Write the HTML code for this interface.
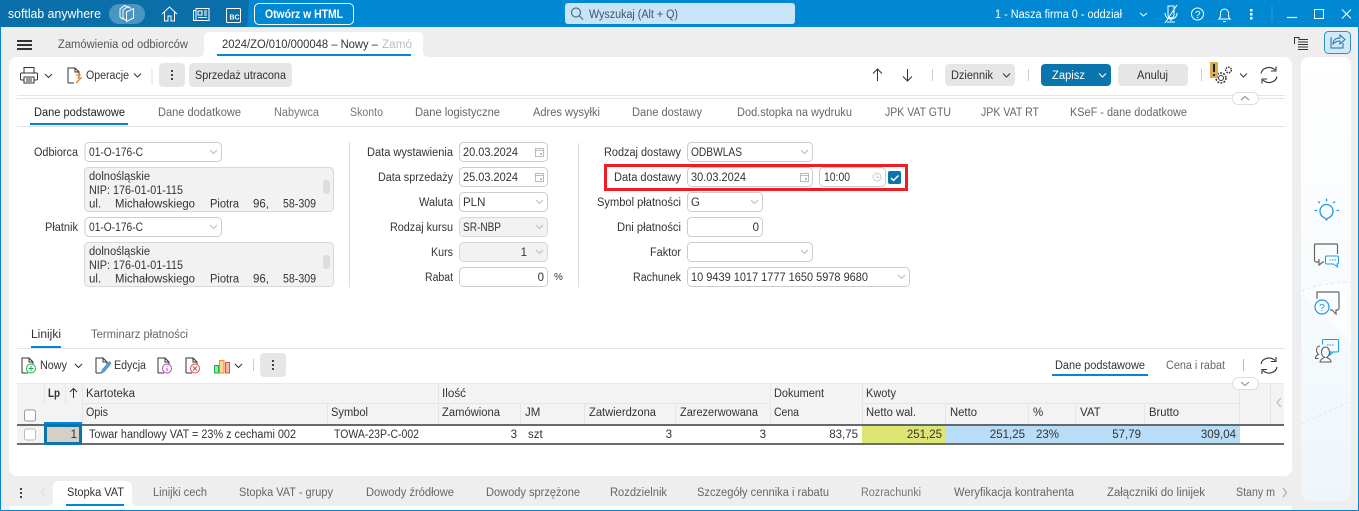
<!DOCTYPE html>
<html lang="pl"><head><meta charset="utf-8"><title>softlab anywhere</title>
<style>
html,body{margin:0;padding:0;background:#eee;width:1359px;height:511px;overflow:hidden}
svg{display:block}
text{font-family:"Liberation Sans",sans-serif;font-size:11.5px;fill:#333;white-space:pre}
.g{fill:#666}.w{fill:#fff}.b{font-weight:bold}.l{fill:#777}
.f{fill:#fff;stroke:#ccc}.d{fill:#f2f2f2;stroke:#d8d8d8}
.i{fill:none;stroke:#333;stroke-width:1}.iw{fill:none;stroke:#fff;stroke-width:1}
.k{fill:none;stroke:#333;stroke-width:1}
.h{fill:#f3f3f3}.s{stroke:#e6e6e6;stroke-width:1}
</style></head><body>
<svg width="1359" height="511" viewBox="0 0 1359 511" xmlns="http://www.w3.org/2000/svg">
<defs>
<linearGradient id="pn" x1="0" y1="0" x2="0" y2="1"><stop offset="0" stop-color="#fff"/><stop offset=".5" stop-color="#f8fbfd"/><stop offset="1" stop-color="#eef6fc"/></linearGradient>
<path id="ch" d="M0 0l3.5 3.5L7 0" fill="none"/>
<g id="doc"><path d="M1 16V1h7l4 4v4M8 1v4h4M1 16h6" fill="none" stroke="#333"/></g>
<g id="ref"><path d="M1 7A8 7 0 0 1 15 3.5M17 10A8 7 0 0 1 3 13.5" fill="none" stroke="#333" stroke-width="1.1"/><path d="M16 0v4.500h-5M2 17v-4.500h5" fill="none" stroke="#333" stroke-width="1.1"/></g>
<g id="cal"><rect x=".5" y="1.500" width="8" height="8" fill="none" stroke="#bbb"/><path d="M.5 3.500h8" stroke="#bbb"/><rect x="5" y="6" width="2" height="2" fill="#bbb"/></g>
</defs>

<!-- window -->
<rect width="1359" height="511" fill="#0089d2"/>
<rect x="1" y="27" width="1357" height="483" fill="#eee"/>
<path d="M0 0H249L247 27H0Z" fill="#0a6ea8"/>
<text class="w" x="8" y="18" style="font-size:12.500px" textLength="93" lengthAdjust="spacingAndGlyphs">softlab anywhere</text>
<rect x="109" y="4" width="36" height="20" rx="10" fill="#4b95c1"/>
<path class="iw" d="M123 19.500l-3-2.500V9l4.500-3.500 4.500 2M126 20.500l-3-2.500V10l5-3.500 3 2M126.500 12l7-3.500V18l-7 3.500z"/>
<path class="iw" d="M162 14l7.500-7 7.500 7M164.500 12v9h3.500v-5h3v5h3.500v-9"/>
<g class="iw"><rect x="196" y="8.500" width="13" height="12"/><path d="M196 10.500h-2.500v10h2.500M198 11h4v4h-4zM204 11h3M204 13h3M204 15h3M198 17.500h9"/></g>
<rect class="iw" x="226.500" y="8.500" width="14" height="14" rx="1"/><text class="w b" x="229.500" y="19.500" style="font-size:7px">BC</text>
<rect x="254.500" y="3.500" width="99" height="21" rx="4.500" fill="#0089d2" stroke="#fff"/>
<text class="w b" x="265" y="18" textLength="78" lengthAdjust="spacingAndGlyphs">Otwórz w HTML</text>

<rect x="565" y="3" width="230" height="21" rx="3" fill="#c9e4f6"/>
<circle cx="576" cy="12.500" r="4.500" fill="none" stroke="#4a6f88" stroke-width="1.200"/><path d="M579.500 16l3.500 3.500" stroke="#4a6f88" stroke-width="1.200"/>
<text x="589" y="18" textLength="89" lengthAdjust="spacingAndGlyphs" style="fill:#3e5566">Wyszukaj (Alt + Q)</text>

<text class="w" x="995" y="18" textLength="127" lengthAdjust="spacingAndGlyphs">1 - Nasza firma 0 - oddział</text>
<path d="M1140 13l3.500 3 3.500-3" class="iw" stroke-width="1.500"/>
<g class="iw"><path d="M1168 6h6v9a3 3 0 0 1-6 0zM1165 13c0 4 3 6 6 6s6-2 6-6M1171 19v2M1167 22h8M1165 23L1177 5"/></g>
<circle class="iw" cx="1197.500" cy="14" r="6"/><text class="w" x="1195" y="18" style="font-size:10px">?</text>
<path class="iw" d="M1219 19c1.500-1 1.500-3 1.500-6a4 4 0 0 1 8 0c0 3 0 5 1.500 6zM1223 21.500h3"/>
<g fill="#fff"><rect x="1250" y="9" width="2.500" height="2.500"/><rect x="1250" y="13" width="2.500" height="2.500"/><rect x="1250" y="17" width="2.500" height="2.500"/></g>
<path d="M1272 6v16" stroke="#2a9edb"/>
<path d="M1287 17.500h10" stroke="#fff" stroke-width="1.200"/>
<rect class="iw" x="1314.500" y="9.500" width="9" height="9" stroke-width="1.200"/>
<path class="iw" d="M1342 9.500l9 9M1351 9.500l-9 9"/>

<!-- upper tabs -->
<g fill="#333"><rect x="17" y="40" width="15" height="2"/><rect x="17" y="44" width="15" height="2"/><rect x="17" y="48" width="15" height="2"/></g>
<text x="58" y="48" textLength="130" lengthAdjust="spacingAndGlyphs" style="fill:#555">Zamówienia od odbiorców</text>
<path d="M198 57c4 0 6-2 6-6V38c0-4 2-6 6-6h207c4 0 6 2 6 6v13c0 4 2 6 6 6z" fill="#fff"/>
<text x="222" y="48" textLength="156" lengthAdjust="spacingAndGlyphs">2024/ZO/010/000048 – Nowy –</text>
<text x="382" y="48" style="fill:#bbb" textLength="30" lengthAdjust="spacingAndGlyphs">Zamó</text>
<rect x="217" y="54" width="194" height="2" fill="#0089d2"/>

<!-- right top -->
<path class="k" d="M1294.500 44V37.500h4.500v2h9M1298 42h10M1298 44.500h10M1298 47h10M1298 49.500h10" stroke-width=".9"/>
<rect x="1324.500" y="31.500" width="26" height="22" rx="4" fill="#d3e8f6" stroke="#2f8fc4"/>
<path d="M1332 38h-1v10h12v-5M1333 44c0-4 3-6 7-6v-3l5 4.500-5 4.500v-3c-3 0-5 1-7 3z" fill="none" stroke="#1b74ab"/>

<!-- main panel -->
<rect x="9" y="57" width="1283" height="419" rx="8" fill="#fff"/>
<!-- right side panel -->
<rect x="1301" y="57" width="50" height="444" rx="8" fill="url(#pn)"/>
<path d="M1302 291c12 20 30 30 48 50v-59c-18 1-36 3-48 9z" fill="#fbfdfe"/>
<path d="M1302 291c12-6 30-8 48-9" fill="none" stroke="#d4e9f6" stroke-dasharray="3 3"/>
<path d="M1302 424L1350 401" fill="none" stroke="#d4e9f6" stroke-dasharray="3 3"/>

<!-- toolbar -->
<path class="i" d="M24 73v-5.500h10V73M24 80h-2.500a1 1 0 0 1-1-1v-5a1 1 0 0 1 1-1h15a1 1 0 0 1 1 1v5a1 1 0 0 1-1 1H34M24 77h10v6H24zM26 79h6M26 81h6"/>
<use href="#ch" x="45" y="74" stroke="#333"/>
<use href="#doc" x="67" y="67"/>
<path d="M76 75h4l-2 3h3l-3 3M76 83l2-2" fill="none" stroke="#e8862a" stroke-width="1.300"/>
<text x="86" y="79" textLength="43" lengthAdjust="spacingAndGlyphs">Operacje</text>
<use href="#ch" x="134" y="73.500" stroke="#333"/>
<path d="M152 69v16" stroke="#ddd"/>
<rect x="159" y="63" width="26" height="24" rx="4" fill="#e6e6e6"/>
<g fill="#444"><rect x="171" y="70" width="2" height="2"/><rect x="171" y="74" width="2" height="2"/><rect x="171" y="78" width="2" height="2"/></g>
<rect x="189" y="63" width="103" height="24" rx="4" fill="#e6e6e6"/>
<text x="195" y="79" textLength="91" lengthAdjust="spacingAndGlyphs">Sprzedaż utracona</text>

<path class="k" d="M877.500 81V69M873 73.500l4.500-4.500 4.500 4.500M907.500 69v12M903 76.500l4.500 4.500 4.500-4.500"/>
<path d="M932.500 69v12M1028.500 69v12M1201.500 69v12" stroke="#ccc"/>
<rect x="945" y="64" width="70" height="22" rx="4" fill="#e6e6e6"/>
<text x="951" y="79" textLength="42" lengthAdjust="spacingAndGlyphs">Dziennik</text>
<use href="#ch" x="1003" y="73.500" stroke="#333"/>
<rect x="1041" y="64" width="70" height="22" rx="4" fill="#0a74ad"/>
<text class="w" x="1052" y="79" textLength="33" lengthAdjust="spacingAndGlyphs">Zapisz</text>
<use href="#ch" x="1099" y="73.500" stroke="#fff"/>
<rect x="1118" y="64" width="70" height="22" rx="4" fill="#e6e6e6"/>
<text x="1137" y="79" textLength="31" lengthAdjust="spacingAndGlyphs">Anuluj</text>
<circle cx="1221" cy="78" r="2.500" class="i"/><circle cx="1221" cy="78" r="5" fill="none" stroke="#333" stroke-dasharray="2 1.200" stroke-width="1.500"/>
<circle cx="1228.500" cy="70" r="2.800" fill="none" stroke="#333" stroke-dasharray="1.500 1" stroke-width="1.500"/>
<rect x="1210" y="62" width="8" height="16" fill="#d9ad52"/>
<rect x="1213" y="64" width="2" height="8" fill="#222"/><rect x="1213" y="74" width="2" height="2" fill="#222"/>
<use href="#ch" x="1240" y="73.500" stroke="#333"/>
<use href="#ref" x="1260" y="66.500"/>

<path d="M17 95.500H1285M17 98.500H1285" stroke="#e4e4e4"/>
<rect x="1232.500" y="92.500" width="26" height="12" rx="6" fill="#fff" stroke="#ddd"/>
<path d="M1241 100l4-3.500 4 3.500" fill="none" stroke="#999" stroke-width="1.200"/>

<!-- form tabs -->
<text x="34" y="116" textLength="91" lengthAdjust="spacingAndGlyphs" style="fill:#222">Dane podstawowe</text>
<rect x="30" y="123" width="98" height="2" fill="#0089d2"/>
<path d="M17 126.500H1285" stroke="#e4e4e4"/>
<text class="g" x="158" y="116" textLength="83" lengthAdjust="spacingAndGlyphs">Dane dodatkowe</text>
<text class="l" x="274" y="116" textLength="45" lengthAdjust="spacingAndGlyphs">Nabywca</text>
<text class="l" x="350" y="116" textLength="33" lengthAdjust="spacingAndGlyphs">Skonto</text>
<text class="g" x="415" y="116" textLength="85" lengthAdjust="spacingAndGlyphs">Dane logistyczne</text>
<text class="g" x="533" y="116" textLength="67" lengthAdjust="spacingAndGlyphs">Adres wysyłki</text>
<text class="g" x="632" y="116" textLength="70" lengthAdjust="spacingAndGlyphs">Dane dostawy</text>
<text class="g" x="737" y="116" textLength="115" lengthAdjust="spacingAndGlyphs">Dod.stopka na wydruku</text>
<text class="g" x="885" y="116" textLength="66" lengthAdjust="spacingAndGlyphs">JPK VAT GTU</text>
<text class="g" x="981" y="116" textLength="58" lengthAdjust="spacingAndGlyphs">JPK VAT RT</text>
<text class="g" x="1070" y="116" textLength="117" lengthAdjust="spacingAndGlyphs">KSeF - dane dodatkowe</text>

<!-- column 1 -->
<text x="34" y="156" textLength="44" lengthAdjust="spacingAndGlyphs">Odbiorca</text>
<rect class="f" x="85" y="142.500" width="136.500" height="19" rx="4"/>
<text x="89" y="156" textLength="54" lengthAdjust="spacingAndGlyphs">01-O-176-C</text>
<use href="#ch" x="210" y="150" stroke="#bbb"/>
<rect class="d" x="84.500" y="167.500" width="249" height="44" rx="4"/>
<text x="89" y="180" textLength="61" lengthAdjust="spacingAndGlyphs">dolnośląskie</text>
<text x="89" y="194" textLength="94" lengthAdjust="spacingAndGlyphs">NIP: 176-01-01-115</text>
<text x="89" y="207.500">ul.</text><text x="115" y="207.500" textLength="80" lengthAdjust="spacingAndGlyphs">Michałowskiego</text><text x="210" y="207.500" textLength="29" lengthAdjust="spacingAndGlyphs">Piotra</text><text x="253" y="207.500">96,</text><text x="283" y="207.500" textLength="33" lengthAdjust="spacingAndGlyphs">58-309</text>
<rect x="323" y="180" width="7" height="14" rx="3" fill="#ddd"/>
<text x="45" y="231" textLength="33" lengthAdjust="spacingAndGlyphs">Płatnik</text>
<rect class="f" x="85" y="217.500" width="136.500" height="19" rx="4"/>
<text x="89" y="231" textLength="54" lengthAdjust="spacingAndGlyphs">01-O-176-C</text>
<use href="#ch" x="210" y="225" stroke="#bbb"/>
<rect class="d" x="84.500" y="242.500" width="249" height="44" rx="4"/>
<text x="89" y="255" textLength="61" lengthAdjust="spacingAndGlyphs">dolnośląskie</text>
<text x="89" y="269" textLength="94" lengthAdjust="spacingAndGlyphs">NIP: 176-01-01-115</text>
<text x="89" y="282.500">ul.</text><text x="115" y="282.500" textLength="80" lengthAdjust="spacingAndGlyphs">Michałowskiego</text><text x="210" y="282.500" textLength="29" lengthAdjust="spacingAndGlyphs">Piotra</text><text x="253" y="282.500">96,</text><text x="283" y="282.500" textLength="33" lengthAdjust="spacingAndGlyphs">58-309</text>
<rect x="323" y="255" width="7" height="14" rx="3" fill="#ddd"/>
<path d="M349.500 142v145M578.500 143v144" stroke="#ddd"/>

<!-- column 2 -->
<text x="367" y="156" textLength="86" lengthAdjust="spacingAndGlyphs">Data wystawienia</text>
<rect class="f" x="459.500" y="142.500" width="88" height="19" rx="4"/><text x="463" y="156" textLength="55" lengthAdjust="spacingAndGlyphs">20.03.2024</text><use href="#cal" x="535" y="147"/>
<text x="378" y="181" textLength="75" lengthAdjust="spacingAndGlyphs">Data sprzedaży</text>
<rect class="f" x="459.500" y="167.500" width="88" height="19" rx="4"/><text x="463" y="181" textLength="55" lengthAdjust="spacingAndGlyphs">25.03.2024</text><use href="#cal" x="535" y="172"/>
<text x="419" y="206" textLength="34" lengthAdjust="spacingAndGlyphs">Waluta</text>
<rect class="f" x="459.500" y="192.500" width="88" height="19" rx="4"/><text x="463" y="206">PLN</text><use href="#ch" x="536" y="200" stroke="#bbb"/>
<text x="390" y="231" textLength="63" lengthAdjust="spacingAndGlyphs">Rodzaj kursu</text>
<rect class="d" x="459.500" y="217.500" width="88" height="19" rx="4"/><text x="463" y="231" textLength="38" lengthAdjust="spacingAndGlyphs">SR-NBP</text><use href="#ch" x="536" y="225" stroke="#bbb"/>
<text x="431" y="256" textLength="22" lengthAdjust="spacingAndGlyphs">Kurs</text>
<rect class="d" x="459.500" y="242.500" width="88" height="19" rx="4"/><text x="527" y="256" text-anchor="end">1</text><use href="#ch" x="536" y="250" stroke="#bbb"/>
<text x="425" y="281" textLength="28" lengthAdjust="spacingAndGlyphs">Rabat</text>
<rect class="f" x="459.500" y="267.500" width="88" height="19" rx="4"/><text x="544" y="281" text-anchor="end">0</text>
<text x="554" y="280" style="font-size:10px">%</text>

<!-- column 3 -->
<text x="604" y="156" textLength="77" lengthAdjust="spacingAndGlyphs">Rodzaj dostawy</text>
<rect class="f" x="687.500" y="142.500" width="125" height="19" rx="4"/><text x="691" y="156" textLength="51" lengthAdjust="spacingAndGlyphs">ODBWLAS</text><use href="#ch" x="801" y="150" stroke="#bbb"/>
<text x="614" y="181" textLength="67" lengthAdjust="spacingAndGlyphs">Data dostawy</text>
<rect class="f" x="687.500" y="167.500" width="125" height="19" rx="4"/><text x="691" y="181" textLength="55" lengthAdjust="spacingAndGlyphs">30.03.2024</text><use href="#cal" x="800" y="172"/>
<rect class="f" x="819.500" y="167.500" width="66" height="19" rx="4"/><text x="824" y="181" textLength="26" lengthAdjust="spacingAndGlyphs">10:00</text>
<circle cx="877" cy="177" r="4" fill="none" stroke="#ccc"/><path d="M877 174.500v3h2" fill="none" stroke="#ccc"/>
<rect x="888" y="171" width="13" height="13" rx="2" fill="#0a74ad"/>
<path d="M891 178l2.500 2.500 5-5" fill="none" stroke="#fff" stroke-width="1.500"/>
<rect x="605.500" y="165.500" width="301" height="24" fill="none" stroke="#ee1c25" stroke-width="3"/>
<text x="597" y="206" textLength="84" lengthAdjust="spacingAndGlyphs">Symbol płatności</text>
<rect class="f" x="687.500" y="192.500" width="75" height="19" rx="4"/><text x="691" y="206">G</text><use href="#ch" x="751" y="200" stroke="#bbb"/>
<text x="617" y="231" textLength="64" lengthAdjust="spacingAndGlyphs">Dni płatności</text>
<rect class="f" x="687.500" y="217.500" width="75" height="19" rx="4"/><text x="759" y="231" text-anchor="end">0</text>
<text x="650" y="256" textLength="31" lengthAdjust="spacingAndGlyphs">Faktor</text>
<rect class="f" x="687.500" y="242.500" width="125" height="19" rx="4"/><use href="#ch" x="801" y="250" stroke="#bbb"/>
<text x="633" y="281" textLength="48" lengthAdjust="spacingAndGlyphs">Rachunek</text>
<rect class="f" x="687.500" y="267.500" width="222" height="19" rx="4"/><text x="691" y="281" textLength="177" lengthAdjust="spacingAndGlyphs">10 9439 1017 1777 1650 5978 9680</text><use href="#ch" x="898" y="275" stroke="#bbb"/>

<!-- Linijki tabs -->
<text x="31" y="338" textLength="30" lengthAdjust="spacingAndGlyphs">Linijki</text>
<rect x="31" y="346" width="30" height="2" fill="#0089d2"/>
<text class="g" x="91" y="338" textLength="97" lengthAdjust="spacingAndGlyphs">Terminarz płatności</text>
<path d="M17 348.500H1285" stroke="#e4e4e4"/>

<!-- lines toolbar -->
<use href="#doc" x="21" y="357"/><circle cx="31" cy="368.500" r="4.500" fill="#fff" stroke="#1fae4c"/><path d="M31 366v5M28.500 368.500h5" stroke="#1fae4c"/>
<text x="40" y="369" textLength="27" lengthAdjust="spacingAndGlyphs">Nowy</text><use href="#ch" x="75" y="364" stroke="#333"/>
<use href="#doc" x="95" y="357"/><path d="M101 373l1-3 6-7 2 2-6 7zM108 363l1.500-1.500 1.500 2-1 1" fill="#5a9fd8" stroke="#3a8ccc" stroke-width=".6"/>
<text x="114" y="369" textLength="32" lengthAdjust="spacingAndGlyphs">Edycja</text>
<use href="#doc" x="157" y="357"/><circle cx="167" cy="368.500" r="4.500" fill="#fff" stroke="#a54bb3"/><path d="M167 366v.8M167 368v3" stroke="#a54bb3"/>
<use href="#doc" x="185" y="357"/><circle cx="195" cy="368.500" r="4.500" fill="#fff" stroke="#e5484d"/><path d="M193 366.500l4 4M197 366.500l-4 4" stroke="#e5484d"/>
<rect x="214.500" y="365.500" width="4" height="7.500" fill="#a6dcb5" stroke="#1fae4c"/><rect x="219.500" y="360.500" width="4.500" height="12.500" fill="#f9d79c" stroke="#ec8f1e"/><rect x="225.500" y="362.500" width="4" height="10.500" fill="#f6b4b4" stroke="#e5484d"/>
<use href="#ch" x="235" y="364" stroke="#333"/>
<path d="M253.500 359v12" stroke="#ccc"/>
<rect x="260" y="353" width="26" height="24" rx="4" fill="#e6e6e6"/>
<g fill="#444"><rect x="272" y="360" width="2" height="2"/><rect x="272" y="364" width="2" height="2"/><rect x="272" y="368" width="2" height="2"/></g>
<text x="1055" y="369" textLength="90" lengthAdjust="spacingAndGlyphs">Dane podstawowe</text>
<rect x="1052" y="374" width="96" height="2" fill="#0089d2"/>
<text class="g" x="1166" y="369" textLength="59" lengthAdjust="spacingAndGlyphs">Cena i rabat</text>
<path d="M1243.500 359v12" stroke="#bbb"/>
<use href="#ref" x="1260" y="357"/>

<!-- grid header -->
<rect x="17" y="383" width="1267" height="41" class="h"/>
<path d="M17 383.500H1284" stroke="#e9e9e9"/>
<path d="M82 403.500H770M862 403.500H1240" stroke="#e6e6e6"/>
<path class="s" d="M44.500 383v21M65.500 383v20M82.500 383v41M327.500 403v21M438.500 383v41M520.500 403v21M584.500 403v21M675.500 403v21M770.500 383v41M862.500 383v41M945.500 403v21M1028.500 403v21M1075.500 403v21M1144.500 403v21M1239.500 383v41M1270.500 383v41"/>
<rect x="44" y="422" width="38" height="2" fill="#0089d2"/>
<rect x="24.500" y="410" width="11" height="11" rx="2" fill="#fff" stroke="#999"/>
<text class="b" x="48" y="397" textLength="12" lengthAdjust="spacingAndGlyphs">Lp</text>
<path class="k" d="M73.500 398v-9M70 392l3.500-3.500 3.500 3.500"/>
<text x="86" y="397" textLength="49" lengthAdjust="spacingAndGlyphs">Kartoteka</text>
<text x="442" y="397" textLength="24" lengthAdjust="spacingAndGlyphs">Ilość</text>
<text x="774" y="397" textLength="50" lengthAdjust="spacingAndGlyphs">Dokument</text>
<text x="866" y="397" textLength="30" lengthAdjust="spacingAndGlyphs">Kwoty</text>
<text x="86" y="416" textLength="22" lengthAdjust="spacingAndGlyphs">Opis</text>
<text x="331" y="416" textLength="37" lengthAdjust="spacingAndGlyphs">Symbol</text>
<text x="442" y="416" textLength="58" lengthAdjust="spacingAndGlyphs">Zamówiona</text>
<text x="525" y="416">JM</text>
<text x="589" y="416" textLength="67" lengthAdjust="spacingAndGlyphs">Zatwierdzona</text>
<text x="680" y="416" textLength="78" lengthAdjust="spacingAndGlyphs">Zarezerwowana</text>
<text x="774" y="416" textLength="25" lengthAdjust="spacingAndGlyphs">Cena</text>
<text x="866" y="416" textLength="50" lengthAdjust="spacingAndGlyphs">Netto wal.</text>
<text x="950" y="416" textLength="27" lengthAdjust="spacingAndGlyphs">Netto</text>
<text x="1033" y="416">%</text>
<text x="1080" y="416">VAT</text>
<text x="1149" y="416" textLength="30" lengthAdjust="spacingAndGlyphs">Brutto</text>
<path d="M1281 398l-4 4.500 4 4.500" fill="none" stroke="#bbb" stroke-width="1.200"/>
<rect x="1232.500" y="377.500" width="26" height="12" rx="6" fill="#fff" stroke="#ddd"/>
<path d="M1241 382l4 3.500 4-3.500" fill="none" stroke="#999" stroke-width="1.200"/>

<!-- grid row -->
<rect x="862" y="426" width="84" height="17" fill="#dde673"/>
<rect x="946" y="426" width="294" height="17" fill="#b9dcf7"/>
<rect x="17" y="426" width="27" height="17" fill="#f3f3f3"/>
<rect x="17" y="424" width="1267" height="2" fill="#5f6b70"/>
<rect x="17" y="443" width="1267" height="2" fill="#6c6c6c"/>
<rect x="45.500" y="425.500" width="35" height="18" fill="#d4d0c8" stroke="#0a74ad" stroke-width="3"/>
<rect x="24.500" y="429" width="11" height="11" rx="2" fill="#fff" stroke="#bbb"/>
<text x="77" y="438" text-anchor="end">1</text>
<text x="89" y="438" textLength="207" lengthAdjust="spacingAndGlyphs">Towar handlowy VAT = 23% z cechami 002</text>
<text x="334" y="438" textLength="85" lengthAdjust="spacingAndGlyphs">TOWA-23P-C-002</text>
<text x="517" y="438" text-anchor="end">3</text>
<text x="528" y="438">szt</text>
<text x="672" y="438" text-anchor="end">3</text>
<text x="766" y="438" text-anchor="end">3</text>
<text x="858" y="438" text-anchor="end">83,75</text>
<text x="942" y="438" text-anchor="end">251,25</text>
<text x="1025" y="438" text-anchor="end">251,25</text>
<text x="1036" y="438">23%</text>
<text x="1141" y="438" text-anchor="end">57,79</text>
<text x="1236" y="438" text-anchor="end">309,04</text>

<!-- bottom tabs -->
<rect x="9" y="506" width="1283" height="4" rx="2" fill="#fff"/>
<g fill="#444"><rect x="20" y="488" width="2" height="2"/><rect x="20" y="492" width="2" height="2"/><rect x="20" y="496" width="2" height="2"/></g>
<path d="M45 488l-3.500 4.500 3.500 4.500" fill="none" stroke="#ddd" stroke-width="1.200"/>
<path d="M47 506c4 0 6-2 6-5v-14c0-4 2-6 6-6h66c4 0 7 2 7 6v14c0 3 3 5 6 5z" fill="#fff"/>
<text x="67" y="496" textLength="57" lengthAdjust="spacingAndGlyphs">Stopka VAT</text>
<rect x="66" y="504" width="58" height="2" fill="#0089d2"/>
<text class="g" x="153" y="496" textLength="54" lengthAdjust="spacingAndGlyphs">Linijki cech</text>
<text class="g" x="239" y="496" textLength="94" lengthAdjust="spacingAndGlyphs">Stopka VAT - grupy</text>
<text class="g" x="366" y="496" textLength="88" lengthAdjust="spacingAndGlyphs">Dowody źródłowe</text>
<text class="g" x="486" y="496" textLength="94" lengthAdjust="spacingAndGlyphs">Dowody sprzężone</text>
<text class="g" x="610" y="496" textLength="57" lengthAdjust="spacingAndGlyphs">Rozdzielnik</text>
<text class="g" x="697" y="496" textLength="132" lengthAdjust="spacingAndGlyphs">Szczegóły cennika i rabatu</text>
<text class="l" x="861" y="496" textLength="60" lengthAdjust="spacingAndGlyphs">Rozrachunki</text>
<text class="g" x="954" y="496" textLength="120" lengthAdjust="spacingAndGlyphs">Weryfikacja kontrahenta</text>
<text class="g" x="1107" y="496" textLength="98" lengthAdjust="spacingAndGlyphs">Załączniki do linijek</text>
<text class="g" x="1236" y="496" textLength="39" lengthAdjust="spacingAndGlyphs">Stany m</text>
<path d="M1283 488l3.500 4.500-3.500 4.500" fill="none" stroke="#aaa" stroke-width="1.200"/>

<!-- side icons -->
<g fill="none" stroke="#1c9be0" stroke-width="1.300">
<path d="M1325 218c-3-1-5-3.500-5-7a6.500 6.500 0 0 1 13 0c0 3.500-2 6-5 7l-1.500 2z"/>
<path d="M1326.500 198.500v3M1318 201.500l2 1.500M1335 201.500l-2 1.500M1317 210.500h-2.500M1339 210.500h-2.500"/>
</g>
<path d="M1319 262h-2.500a2 2 0 0 1-2-2v-15a1 1 0 0 1 1-1h21a1 1 0 0 1 1 1v9M1319 259v6l4-3h1" fill="none" stroke="#666" stroke-width="1.200"/>
<path d="M1327 256h10a1.500 1.500 0 0 1 1.500 1.500v5a1.500 1.500 0 0 1-1.500 1.500l.5 3-4-3h-6.500a1.500 1.500 0 0 1-1.500-1.500v-5a1.500 1.500 0 0 1 1.500-1.500z" fill="#fff" stroke="#1c9be0"/>
<path d="M1329.500 260h7" stroke="#1c9be0" stroke-dasharray="1.500 1"/>
<path d="M1317 299v-7h21a1 1 0 0 1 1 1v15a2 2 0 0 1-2 2h-1v4l-4-4h-2" fill="none" stroke="#666" stroke-width="1.200"/>
<circle cx="1322" cy="307" r="7" fill="#f7fbfe" stroke="#1c9be0" stroke-width="1.200"/>
<text x="1319" y="311" style="font-size:10.500px;fill:#1c9be0">?</text>
<path d="M1330 352h7a1.500 1.500 0 0 0 1.500-1.500v-10a1 1 0 0 0-1-1h-14a1 1 0 0 0-1 1v4M1330 352v3l3-3" fill="#f5fafe" stroke="#1c9be0"/>
<path d="M1327 345h7" stroke="#1c9be0" stroke-dasharray="1.500 1"/>
<path d="M1320 362c0-3 3-3.500 4.500-4.500-2-1-3-3-3-5.500 0-3 2-5 4-5s4 2 4 5c0 2.500-1 4.500-3 5.500 2 1 4.500 1.500 4.500 4.500z" fill="#f7fbfe" stroke="#555"/>
<path d="M1320 346c-2 0-3.500 1.500-3.500 4 0 2 1 3.500 2 4.500-2 .5-3 2-3 4h3" fill="none" stroke="#555"/>
</svg>
</body></html>
